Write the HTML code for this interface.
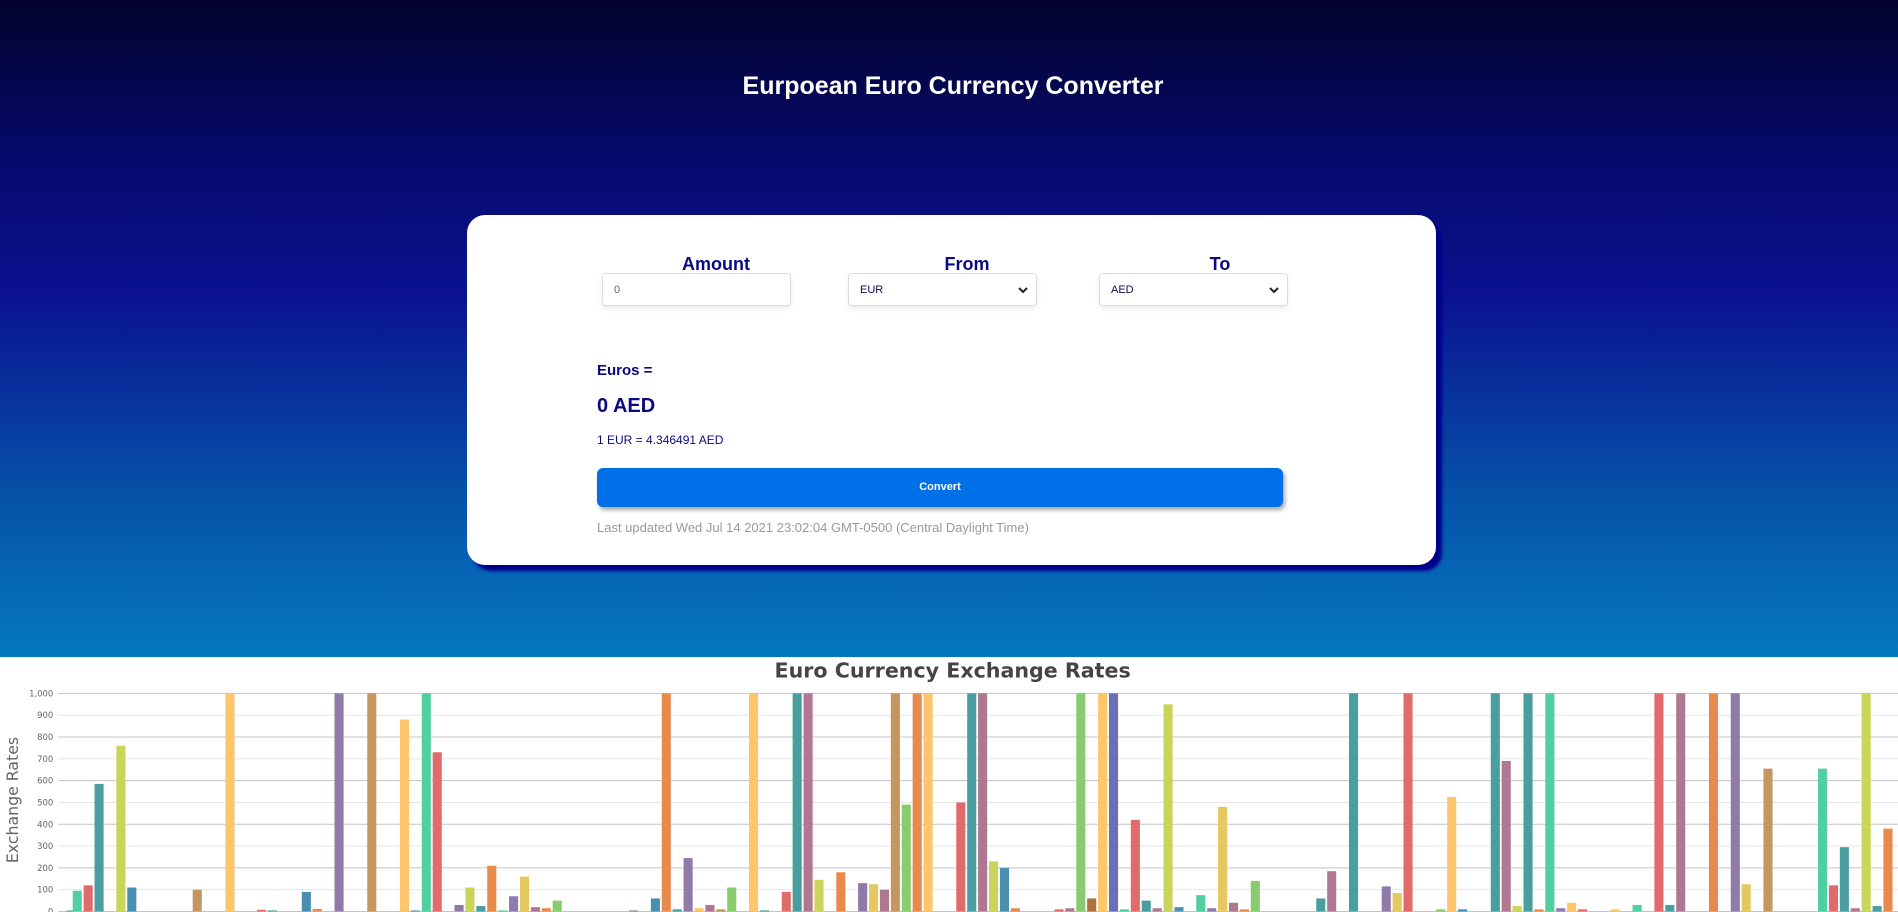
<!DOCTYPE html>
<html><head><meta charset="utf-8">
<style>
*{margin:0;padding:0;box-sizing:border-box}
body{width:1898px;height:912px;overflow:hidden;font-family:"Liberation Sans",Arial,sans-serif;background:#fff}
.top{position:absolute;left:0;top:0;width:1898px;height:657px;background:linear-gradient(180deg,#03032c 0%,#060a6e 25%,#0a1290 45%,#0651a8 75%,#0578c2 100%)}
h1{position:absolute;top:72px;left:0;width:1906px;text-align:center;color:#fff;font-size:25px;font-weight:bold}
.card{position:absolute;left:467px;top:215px;width:969px;height:350px;background:#fff;border-radius:18px;box-shadow:6px 6px 3px #00008a}
.lbl{position:absolute;color:#0a0a80;font-weight:bold;font-size:18px;text-align:center;width:190px;top:39px}
.inp{position:absolute;top:58px;height:33px;width:189px;border:1px solid #ddd;border-radius:4px;box-shadow:0 3px 6px rgba(0,0,0,.08);font-size:11px;color:#0a0a50;padding:10px 0 0 11px}
.inp svg{position:absolute;right:8px;top:12px}
.t{position:absolute;left:130px;color:#0a0a80;font-weight:bold}
.btn{position:absolute;left:130px;top:253px;width:686px;height:39px;background:#0070e8;border-radius:6px;box-shadow:2px 3px 4px rgba(0,0,0,.35);color:#fff;font-weight:bold;font-size:11px;text-align:center;line-height:39px}
.lu{position:absolute;left:130px;top:305px;color:#9a9a9a;font-size:13px}
svg.ch{position:absolute;left:0;top:657px}
</style></head><body>
<div class="top">
<h1>Eurpoean Euro Currency Converter</h1>
<div class="card">
<div class="lbl" style="left:154px">Amount</div>
<div class="lbl" style="left:405px">From</div>
<div class="lbl" style="left:658px">To</div>
<div class="inp" style="left:135px;color:#666">0</div>
<div class="inp" style="left:381px">EUR<svg width="10" height="8" viewBox="0 0 10 8"><path d="M1 2l4 4 4-4" stroke="#222" stroke-width="2" fill="none"/></svg></div>
<div class="inp" style="left:632px">AED<svg width="10" height="8" viewBox="0 0 10 8"><path d="M1 2l4 4 4-4" stroke="#222" stroke-width="2" fill="none"/></svg></div>
<div class="t" style="top:147px;font-size:15px">Euros =</div>
<div class="t" style="top:180px;font-size:20px">0 AED</div>
<div class="t" style="top:218px;font-size:12px;font-weight:normal">1 EUR = 4.346491 AED</div>
<div class="btn">Convert</div>
<div class="lu">Last updated Wed Jul 14 2021 23:02:04 GMT-0500 (Central Daylight Time)</div>
</div>
</div>
<svg class="ch" width="1898" height="255" viewBox="0 0 1566 210.4" preserveAspectRatio="none" id="c">
<text x="786" y="17" text-anchor="middle" font-family="DejaVu Sans,sans-serif" font-size="17" font-weight="bold" fill="#444">Euro Currency Exchange Rates</text>
<text transform="translate(15,118) rotate(-90)" text-anchor="middle" font-family="DejaVu Sans,sans-serif" font-size="13" fill="#666">Exchange Rates</text>
<g id="g"></g>
</svg>
<script>
var g=document.getElementById('g'),s='';
for(var i=0;i<=10;i++){var y=30+18*i;s+='<line x1="48" x2="1566" y1="'+y+'" y2="'+y+'" stroke="'+(i%2?'#e2e2e2':'#c4c4c4')+'" stroke-width="0.8"/>';
var v=(10-i)*100;s+='<text x="44" y="'+(y+2.5)+'" text-anchor="end" font-family="DejaVu Sans,sans-serif" font-size="7" fill="#666">'+(v==1000?'1,000':v)+'</text>';}
var C={gr:'#52cfa0',re:'#e06b6b',te:'#4b9ea0',yg:'#c8d45a',bl:'#4a8fb0',br:'#c49660',ye:'#fdc56c',pu:'#8f7aa8',or:'#e68a4e',ma:'#b07890',sl:'#6b6fb8',lg:'#88cc70',db:'#b07040',ye2:'#e6c860'};
var B=[[55,5,'te'],[60,95,'gr'],[69,120,'re'],[78,585,'te'],[96,760,'yg'],[105,110,'bl'],[159,100,'br'],[186,1000,'ye'],[212,8,'re'],[221,5,'te'],[249,90,'bl'],[258,12,'or'],[276,1000,'pu'],[303,1000,'br'],[330,880,'ye'],[339,5,'te'],[348,1000,'gr'],[357,730,'re'],[375,30,'pu'],[384,110,'yg'],[393,25,'te'],[402,210,'or'],[411,5,'gr'],[420,70,'pu'],[429,160,'ye2'],[438,20,'ma'],[447,15,'or'],[456,50,'lg'],[519,5,'pu'],[537,60,'bl'],[546,1000,'or'],[555,10,'te'],[564,245,'pu'],[573,15,'ye'],[582,30,'ma'],[591,10,'br'],[600,110,'lg'],[618,1000,'ye'],[627,5,'te'],[645,90,'re'],[654,1000,'te'],[663,1000,'ma'],[672,145,'yg'],[690,180,'or'],[708,130,'pu'],[717,125,'ye2'],[726,100,'ma'],[735,1000,'br'],[744,490,'lg'],[753,1000,'or'],[762,1000,'ye'],[789,500,'re'],[798,1000,'te'],[807,1000,'ma'],[816,230,'yg'],[825,200,'bl'],[834,15,'or'],[870,10,'re'],[879,15,'ma'],[888,1000,'lg'],[897,60,'db'],[906,1000,'ye'],[915,1000,'sl'],[924,10,'gr'],[933,420,'re'],[942,50,'te'],[951,15,'ma'],[960,950,'yg'],[969,20,'bl'],[987,75,'gr'],[996,15,'pu'],[1005,480,'ye2'],[1014,40,'ma'],[1023,10,'or'],[1032,140,'lg'],[1086,60,'te'],[1095,185,'ma'],[1113,1000,'te'],[1140,115,'pu'],[1149,85,'ye2'],[1158,1000,'re'],[1185,10,'lg'],[1194,525,'ye'],[1203,10,'bl'],[1230,1000,'te'],[1239,690,'ma'],[1248,25,'yg'],[1257,1000,'te'],[1266,10,'or'],[1275,1000,'gr'],[1284,15,'pu'],[1293,40,'ye'],[1302,10,'re'],[1329,10,'ye'],[1347,30,'gr'],[1365,1000,'re'],[1374,30,'te'],[1383,1000,'ma'],[1410,1000,'or'],[1428,1000,'pu'],[1437,125,'ye2'],[1455,655,'br'],[1500,655,'gr'],[1509,120,'re'],[1518,295,'te'],[1527,15,'ma'],[1536,1000,'yg'],[1545,25,'te'],[1554,380,'or']];
B.forEach(function(b){var h=b[1]*0.18;s+='<rect x="'+b[0]+'" y="'+(210-h)+'" width="7.5" height="'+h+'" fill="'+C[b[2]]+'"/>';});
g.innerHTML=s;
</script>
</body></html>
